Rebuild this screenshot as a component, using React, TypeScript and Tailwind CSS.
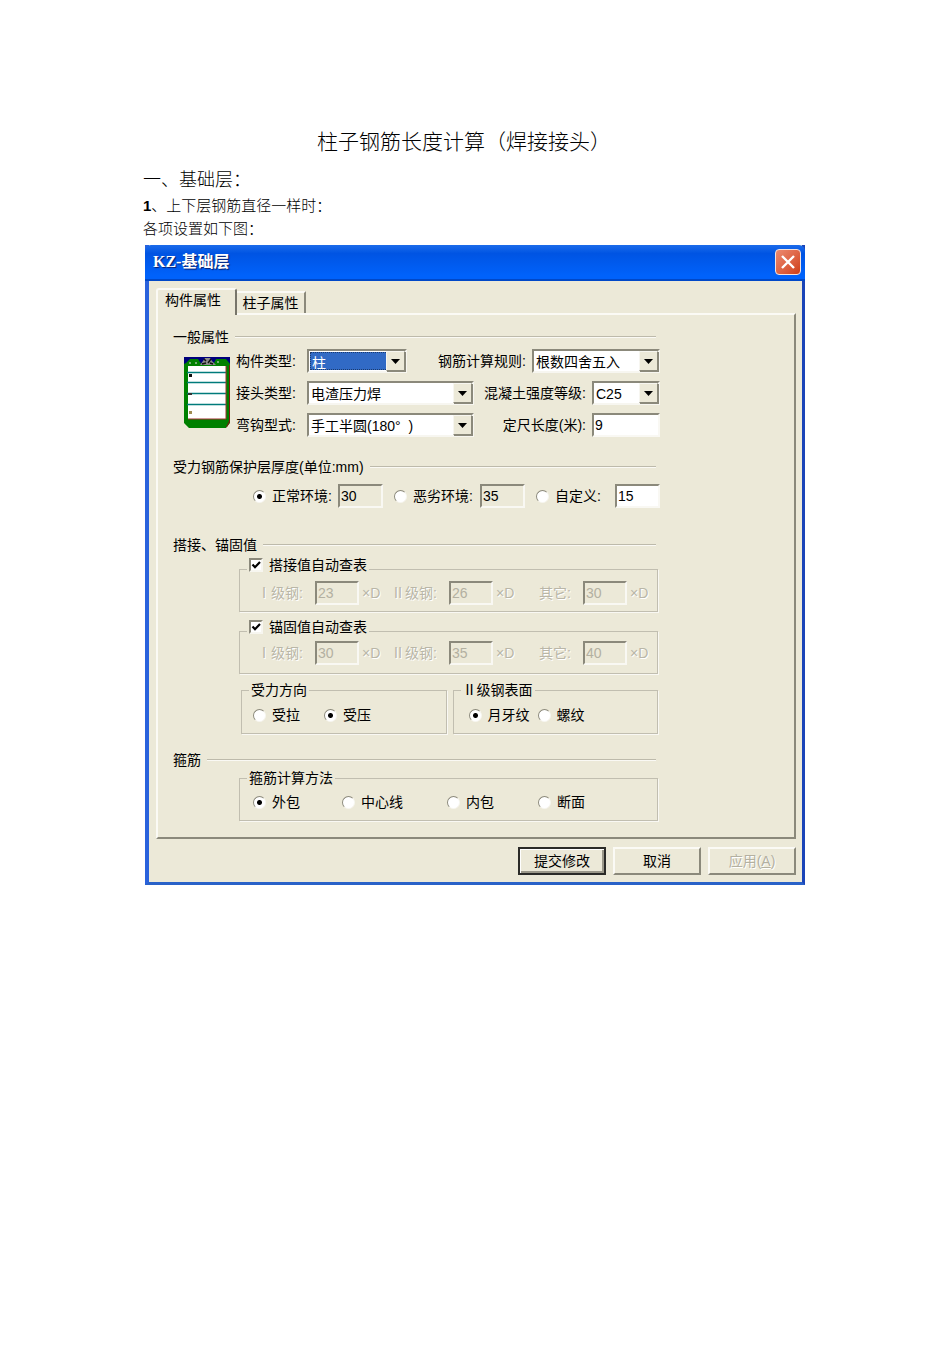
import React, { useState } from 'react';

interface SelectProps {
  id: string;
  options: string[];
  width: string;
  highlighted?: boolean;
}

const ComboBox: React.FC<SelectProps> = ({ id, options, width, highlighted = false }) => (
  <div className={`relative h-6 bg-white border-2 border-t-[#8b897b] border-l-[#8b897b] border-r-[#f7f6f0] border-b-[#f7f6f0] p-px ${width}`}>
    <select
      id={id}
      className={`block w-full h-full appearance-none pl-px outline-none ${
        highlighted ? 'bg-[#316ac5] text-white border border-dotted border-[#1b3a6b]' : 'bg-white text-black'
      }`}
    >
      {options.map((o) => (
        <option key={o}>{o}</option>
      ))}
    </select>
    <span className="pointer-events-none absolute inset-y-0 right-0 w-[19px] bg-[#ece9d8] border border-t-[#f7f6f0] border-l-[#f7f6f0] border-r-[#8b897b] border-b-[#8b897b] shadow-[1px_1px_0_#8b897b] flex items-center justify-center">
      <svg width="9" height="5" viewBox="0 0 9 5">
        <path d="M0 0h9L4.500 5z" fill="#000" />
      </svg>
    </span>
  </div>
);

interface NumProps {
  label: string;
  value: string;
  disabled?: boolean;
  grey?: boolean;
  width?: string;
  id?: string;
}

const NumBox: React.FC<NumProps> = ({ label, value, disabled, grey, width = 'w-[45px]', id }) => (
  <input
    id={id}
    type="text"
    aria-label={id ? undefined : label}
    defaultValue={value}
    disabled={disabled}
    className={`h-6 shrink-0 border-2 border-t-[#8b897b] border-l-[#8b897b] border-r-[#f9f8f3] border-b-[#f9f8f3] pl-px outline-none disabled:text-[#b3b0a1] ${
      grey || disabled ? 'bg-[#ece9d8]' : 'bg-white'
    } ${width}`}
  />
);

interface RadioProps {
  name: string;
  label: string;
  checked?: boolean;
  width?: string;
}

const Radio: React.FC<RadioProps> = ({ name, label, checked, width = '' }) => (
  <label className={`flex h-5 items-center gap-1.5 whitespace-nowrap ${width}`}>
    <input
      type="radio"
      name={name}
      defaultChecked={checked}
      className="size-[13px] shrink-0 appearance-none rounded-full bg-white border border-t-[#8b897b] border-l-[#8b897b] border-r-[#f7f6f0] border-b-[#f7f6f0] checked:bg-[radial-gradient(circle,#000_2px,#fff_3px)]"
    />
    {label}
  </label>
);

const SectionTitle: React.FC<{ children: React.ReactNode }> = ({ children }) => (
  <h3 className="flex h-5 items-center gap-1.5 mr-1 whitespace-nowrap">
    {children}
    <span className="flex-1 h-0.5 bg-[#bdbaab] border-b border-[#faf9f4]" />
  </h3>
);

const box = 'min-w-0 border border-[#c1beb0] shadow-[1px_1px_0_#f9f8f3]';

interface TableLookupProps {
  label: string;
  values: string[];
  pad: string;
}

// checkbox in the legend locks the three coefficient fields
const TableLookup: React.FC<TableLookupProps> = ({ label, values, pad }) => {
  const [auto, setAuto] = useState(true);
  const names = ['Ⅰ级钢:', 'Ⅱ级钢:', '其它:'];

  return (
    <fieldset className={`${box} ml-[66px] mr-0.5 px-[7px]`}>
      <legend className="flex h-3 items-end bg-[#ece9d8] px-0.5">
        <label className="flex h-5 items-center gap-1.5 whitespace-nowrap">
          <span className="relative block size-[14px]">
            <input
              type="checkbox"
              checked={auto}
              onChange={(e) => setAuto(e.target.checked)}
              className="peer block size-[14px] appearance-none bg-white border-2 border-t-[#8b897b] border-l-[#8b897b] border-r-[#f7f6f0] border-b-[#f7f6f0]"
            />
            <svg className="pointer-events-none absolute inset-0 hidden peer-checked:block" width="14" height="14" viewBox="0 0 14 14">
              <path d="M3.500 6.500L6 9.200l5-5.200" fill="none" stroke="#000" strokeWidth="2.200" />
            </svg>
          </span>
          {label}
        </label>
      </legend>
      <div className={`flex gap-[9px] pl-2.5 ${pad}`}>
        {names.map((n, i) => (
          <label key={n} className={`flex items-center whitespace-nowrap ${auto ? 'text-[#b9b6a7] [text-shadow:1px_1px_0_#fff]' : ''}`}>
            <span className="w-[58px] pr-3 text-right">{n}</span>
            <NumBox label={n} value={values[i]} disabled={auto} width="w-[44px]" />
            <span className="w-[23px] pl-[3px]">×D</span>
          </label>
        ))}
      </div>
    </fieldset>
  );
};

const Clipboard = () => (
  <svg className="mt-2 shrink-0" width="46" height="71" viewBox="0 0 46 71">
    <rect width="46" height="14" fill="#00007b" />
    <path d="M2 6L6 2h12l3 5h6l3-5h12l4 5v59l-4 5H5l-5-5V7z" fill="#008000" />
    <path d="M45 8h1v57l-3 5h-1l3-6z" fill="#7b1a10" />
    <path d="M14 2h18l-3 6H18z" fill="#00007b" />
    <path d="M16 8l3-4 2-3h5l2 3 4 4z" fill="#8c8c8c" />
    <path d="M20 2l2 2M27 2l-3 4M18 7l4-1M29 7l-3-1" stroke="#111" strokeWidth="1.500" />
    <circle cx="6" cy="6" r="1" fill="#9bbf9b" />
    <circle cx="12" cy="6" r="1" fill="#9bbf9b" />
    <circle cx="34" cy="5" r="1" fill="#9bbf9b" />
    <rect x="4" y="9" width="38" height="53" fill="#fff" />
    <path d="M3 15.500h39M3 25.500h39M3 36.500h39M3 47.500h39" stroke="#007b7b" strokeWidth="1.500" />
    <path d="M4 62h38V9" fill="none" stroke="#a03030" />
    <rect x="5" y="17" width="3" height="3" fill="#111" />
    <rect x="4" y="36" width="4" height="2" fill="#333" />
    <rect x="5" y="54" width="3" height="3" fill="#a08c50" />
  </svg>
);

const raised = 'h-7 w-[88px] bg-[#ece9d8] border-2 border-t-[#fbfaf5] border-l-[#fbfaf5] border-r-[#8b897b] border-b-[#8b897b]';

const PropertyDialog = () => {
  const [tab, setTab] = useState(0);

  return (
    <section className="ml-[2px] mt-1.5 bg-[#ece9d8] font-['Liberation_Sans','Noto_Sans_CJK_SC',sans-serif] text-sm font-normal leading-5 text-black border-l-4 border-r-3 border-b-3 border-l-[#2a62dc] border-r-[#1a44b8] border-b-[#2a62c8]">
      <header className="-ml-1 -mr-[3px] flex h-9 items-center justify-between rounded-t-md bg-linear-to-b from-[#1b6bea] from-0% via-[#0054e3] via-25% to-[#0062fb] to-90% border-b-2 border-[#0048c8] pl-2 pr-1">
        <h2 className="font-['Liberation_Serif','Noto_Sans_CJK_SC',serif] text-base font-bold text-white [text-shadow:1px_1px_1px_#0a1f6b]">KZ-基础层</h2>
        <button aria-label="关闭" className="flex size-[26px] items-center justify-center rounded-[4px] border border-[#f3e3df] bg-linear-to-br from-[#ec8a70] to-[#cf3c10]">
          <svg width="16" height="16" viewBox="0 0 16 16">
            <path d="M2 2l12 12M14 2L2 14" stroke="#fff" strokeWidth="2.400" />
          </svg>
        </button>
      </header>

      <div className="pl-[7px] pr-1.5 pt-[7px] pb-[7px]">
        <div role="tablist" className="flex items-end">
          <button
            role="tab"
            aria-selected={tab === 0}
            onClick={() => setTab(0)}
            className="relative -mb-0.5 h-[27px] w-[81px] rounded-t-[3px] border-2 border-b-0 border-t-[#fbfaf5] border-l-[#fbfaf5] border-r-[#77756a] bg-[#ece9d8] pb-2 pl-[7px] text-left"
          >
            构件属性
          </button>
          <button
            role="tab"
            aria-selected={tab === 1}
            onClick={() => setTab(1)}
            className="h-[22px] w-[69px] border-t-2 border-r-2 border-t-[#fbfaf5] border-r-[#8b897b] pb-1"
          >
            柱子属性
          </button>
        </div>

        <form className="border-2 border-t-[#fbfaf5] border-l-[#fbfaf5] border-r-[#8b897b] border-b-[#8b897b] pl-[15px] pr-[134px] pt-3 pb-4" onSubmit={(e) => e.preventDefault()}>
          <SectionTitle>一般属性</SectionTitle>
          <div className="mt-0.5 flex gap-1.5 pl-[11px]">
            <Clipboard />
            <div className="flex min-w-0 flex-1 flex-col gap-2">
              <div className="flex items-center">
                <label htmlFor="member" className="w-[71px] shrink-0">构件类型:</label>
                <ComboBox id="member" options={['柱', '梁', '墙']} width="w-[100px]" highlighted />
                <label htmlFor="rule" className="ml-auto mr-1.5">钢筋计算规则:</label>
                <ComboBox id="rule" options={['根数四舍五入', '向上取整']} width="w-[128px]" />
              </div>
              <div className="flex items-center">
                <label htmlFor="joint" className="w-[71px] shrink-0">接头类型:</label>
                <ComboBox id="joint" options={['电渣压力焊', '绑扎']} width="w-[167px]" />
                <label htmlFor="grade" className="ml-auto mr-1.5">混凝土强度等级:</label>
                <ComboBox id="grade" options={['C25', 'C30']} width="w-[68px]" />
              </div>
              <div className="flex items-center">
                <label htmlFor="hook" className="w-[71px] shrink-0">弯钩型式:</label>
                <ComboBox id="hook" options={['手工半圆(180°\u00a0\u00a0)', '直钩(90°)']} width="w-[167px]" />
                <label htmlFor="length" className="ml-auto mr-1.5">定尺长度(米):</label>
                <NumBox id="length" label="定尺长度" value="9" width="w-[68px]" />
              </div>
            </div>
          </div>

          <div className="mt-5">
            <SectionTitle>受力钢筋保护层厚度(单位:mm)</SectionTitle>
            <div className="mt-[7px] flex items-center justify-between pl-20">
              <div className="flex items-center">
                <Radio name="env" label="正常环境:" checked width="w-[85px]" />
                <NumBox label="正常环境" value="30" grey />
              </div>
              <div className="flex items-center">
                <Radio name="env" label="恶劣环境:" width="w-[86px]" />
                <NumBox label="恶劣环境" value="35" grey />
              </div>
              <div className="flex items-center">
                <Radio name="env" label="自定义:" width="w-[79px]" />
                <NumBox label="自定义" value="15" />
              </div>
            </div>
          </div>

          <div className="mt-[27px]">
            <SectionTitle>搭接、锚固值</SectionTitle>
            <div className="mt-2 flex flex-col gap-[13px]">
              <TableLookup label="搭接值自动查表" values={['23', '26', '30']} pad="pt-1.5 pb-1.5" />
              <TableLookup label="锚固值自动查表" values={['30', '35', '40']} pad="pt-1 pb-2" />
            </div>
            <div className="mt-2.5 ml-[68px] mr-0.5 grid grid-cols-2 gap-1.5">
              <fieldset className={`${box} px-[7px] pb-2`}>
                <legend className="flex h-3 items-center bg-[#ece9d8] px-0.5">受力方向</legend>
                <div className="flex gap-6 pl-1 pt-[9px]">
                  <Radio name="force" label="受拉" />
                  <Radio name="force" label="受压" checked />
                </div>
              </fieldset>
              <fieldset className={`${box} px-[7px] pb-2`}>
                <legend className="flex h-3 items-center bg-[#ece9d8] px-0.5">Ⅱ级钢表面</legend>
                <div className="flex gap-2 pl-2 pt-[9px]">
                  <Radio name="surface" label="月牙纹" checked />
                  <Radio name="surface" label="螺纹" />
                </div>
              </fieldset>
            </div>
          </div>

          <div className="mt-4">
            <SectionTitle>箍筋</SectionTitle>
            <fieldset className={`${box} mt-0.5 ml-[66px] mr-0.5 px-[7px] pb-2`}>
              <legend className="flex h-3 items-center bg-[#ece9d8] px-0.5">箍筋计算方法</legend>
              <div className="flex pl-1.5 pt-2">
                <Radio name="method" label="外包" checked width="w-[89px]" />
                <Radio name="method" label="中心线" width="w-[105px]" />
                <Radio name="method" label="内包" width="w-[91px]" />
                <Radio name="method" label="断面" />
              </div>
            </fieldset>
          </div>
        </form>

        <div className="mt-2 flex justify-end gap-[7px]">
          <button className="h-7 w-[88px] border-2 border-[#2b2b28] bg-[#ece9d8] shadow-[inset_1px_1px_0_#fff,inset_-2px_-2px_0_#9b988a]">提交修改</button>
          <button className={raised}>取消</button>
          <button disabled className={`${raised} text-[#b3b0a1] [text-shadow:1px_1px_0_#fff]`}>
            应用(<u>A</u>)
          </button>
        </div>
      </div>
    </section>
  );
};

export default function App() {
  return (
    <main lang="zh-CN" className="min-h-screen bg-white pt-[126px] pb-10 pl-[143px] pr-[145px] font-['Noto_Sans_CJK_SC',sans-serif] font-light text-black">
      <h1 className="pr-5 text-center text-[21px] leading-7">柱子钢筋长度计算（焊接接头）</h1>
      <h2 className="mt-2.5 text-lg leading-7">一、基础层：</h2>
      <p className="mt-0.5 text-[15px] leading-[22px]">
        <b className="font-['Liberation_Sans',sans-serif] font-bold">1</b>、上下层钢筋直径一样时：
      </p>
      <p className="text-[15px] leading-[22px]">各项设置如下图：</p>
      <PropertyDialog />
    </main>
  );
}
